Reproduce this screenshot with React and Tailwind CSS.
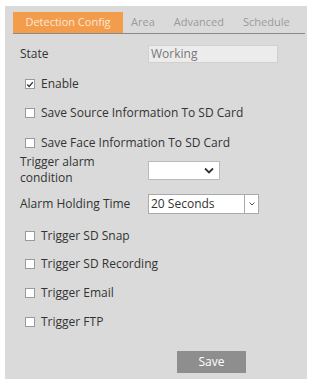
import React from 'react'

const font = { fontFamily: '"Open Sans", "Noto Sans", sans-serif' }

const Check = ({ checked, label, className = '' }) => (
  <div className={`flex items-center h-[16px] pl-[12px] ${className}`}>
    <span className='w-[10px] h-[10px] bg-white border border-[#9a9a9a] flex items-center justify-center'>
      {checked && (
        <svg width='9' height='9' viewBox='0 0 10 10'>
          <path d='M1.5 5 L4 7.5 L8.5 2' stroke='#333' strokeWidth='1.6' fill='none' />
        </svg>
      )}
    </span>
    <span className='ml-[6px] text-[12px] text-[#333]'>{label}</span>
  </div>
)

const App = () => {
  return (
    <div className='w-[309px] h-[379px] bg-white pt-[6px] pl-[5px]' style={font}>
      <div className='w-[302px] h-[373px] bg-[#dadada] pt-[5px] pl-[8px] pr-[2px]'>
        <div className='flex items-end h-[23px] border-b border-[#8a8a8a] text-[11px]'>
          <div className='w-[110px] h-[21px] bg-[#f29c4c] text-[#fde9d6] flex items-center justify-center'>Detection Config</div>
          <div className='ml-[8px] h-[21px] flex items-center text-[#9a9a9a]'>Area</div>
          <div className='ml-[19px] h-[21px] flex items-center text-[#9a9a9a]'>Advanced</div>
          <div className='ml-[19px] h-[21px] flex items-center text-[#9a9a9a]'>Schedule</div>
        </div>

        <div className='flex items-center mt-[11px] h-[18px] text-[12px] text-[#333]'>
          <span className='w-[135px] pl-[7px]'>State</span>
          <div className='w-[130px] h-[18px] bg-[#ececec] border border-[#d0d0d0] text-[#777] pl-[2px] flex items-center'>Working</div>
        </div>

        <Check className='mt-[13px]' checked label='Enable' />
        <Check className='mt-[13px]' label='Save Source Information To SD Card' />
        <Check className='mt-[14px]' label='Save Face Information To SD Card' />

        <div className='flex items-center mt-[3px] text-[12px] text-[#333]'>
          <span className='w-[135px] pl-[7px] leading-[16px]'>Trigger alarm<br />condition</span>
          <div className='w-[72px] h-[19px] bg-white border border-[#bbb] flex items-center justify-end pr-[5px]'>
            <svg width='10' height='7' viewBox='0 0 10 7'>
              <path d='M1 1.5 L5 5.5 L9 1.5' stroke='#333' strokeWidth='1.8' fill='none' />
            </svg>
          </div>
        </div>

        <div className='flex items-center mt-[8px] text-[12px] text-[#333]'>
          <span className='w-[135px] pl-[7px]'>Alarm Holding Time</span>
          <div className='w-[111px] h-[20px] bg-white border border-[#aaa] flex items-center'>
            <span className='flex-1 pl-[2px]'>20 Seconds</span>
            <span className='w-[14px] h-full border-l border-[#aaa] flex items-center justify-center'>
              <svg width='6' height='4' viewBox='0 0 6 4'>
                <path d='M0.5 0.5 L3 3 L5.5 0.5' stroke='#555' strokeWidth='1' fill='none' />
              </svg>
            </span>
          </div>
        </div>

        <Check className='mt-[14px]' label='Trigger SD Snap' />
        <Check className='mt-[12px]' label='Trigger SD Recording' />
        <Check className='mt-[13px]' label='Trigger Email' />
        <Check className='mt-[13px]' label='Trigger FTP' />

        <div className='flex mt-[21px] pl-[164px]'>
          <button className='w-[69px] h-[22px] bg-[#8e8e8e] text-white text-[12px]'>Save</button>
        </div>
      </div>
    </div>
  )
}

export default App
